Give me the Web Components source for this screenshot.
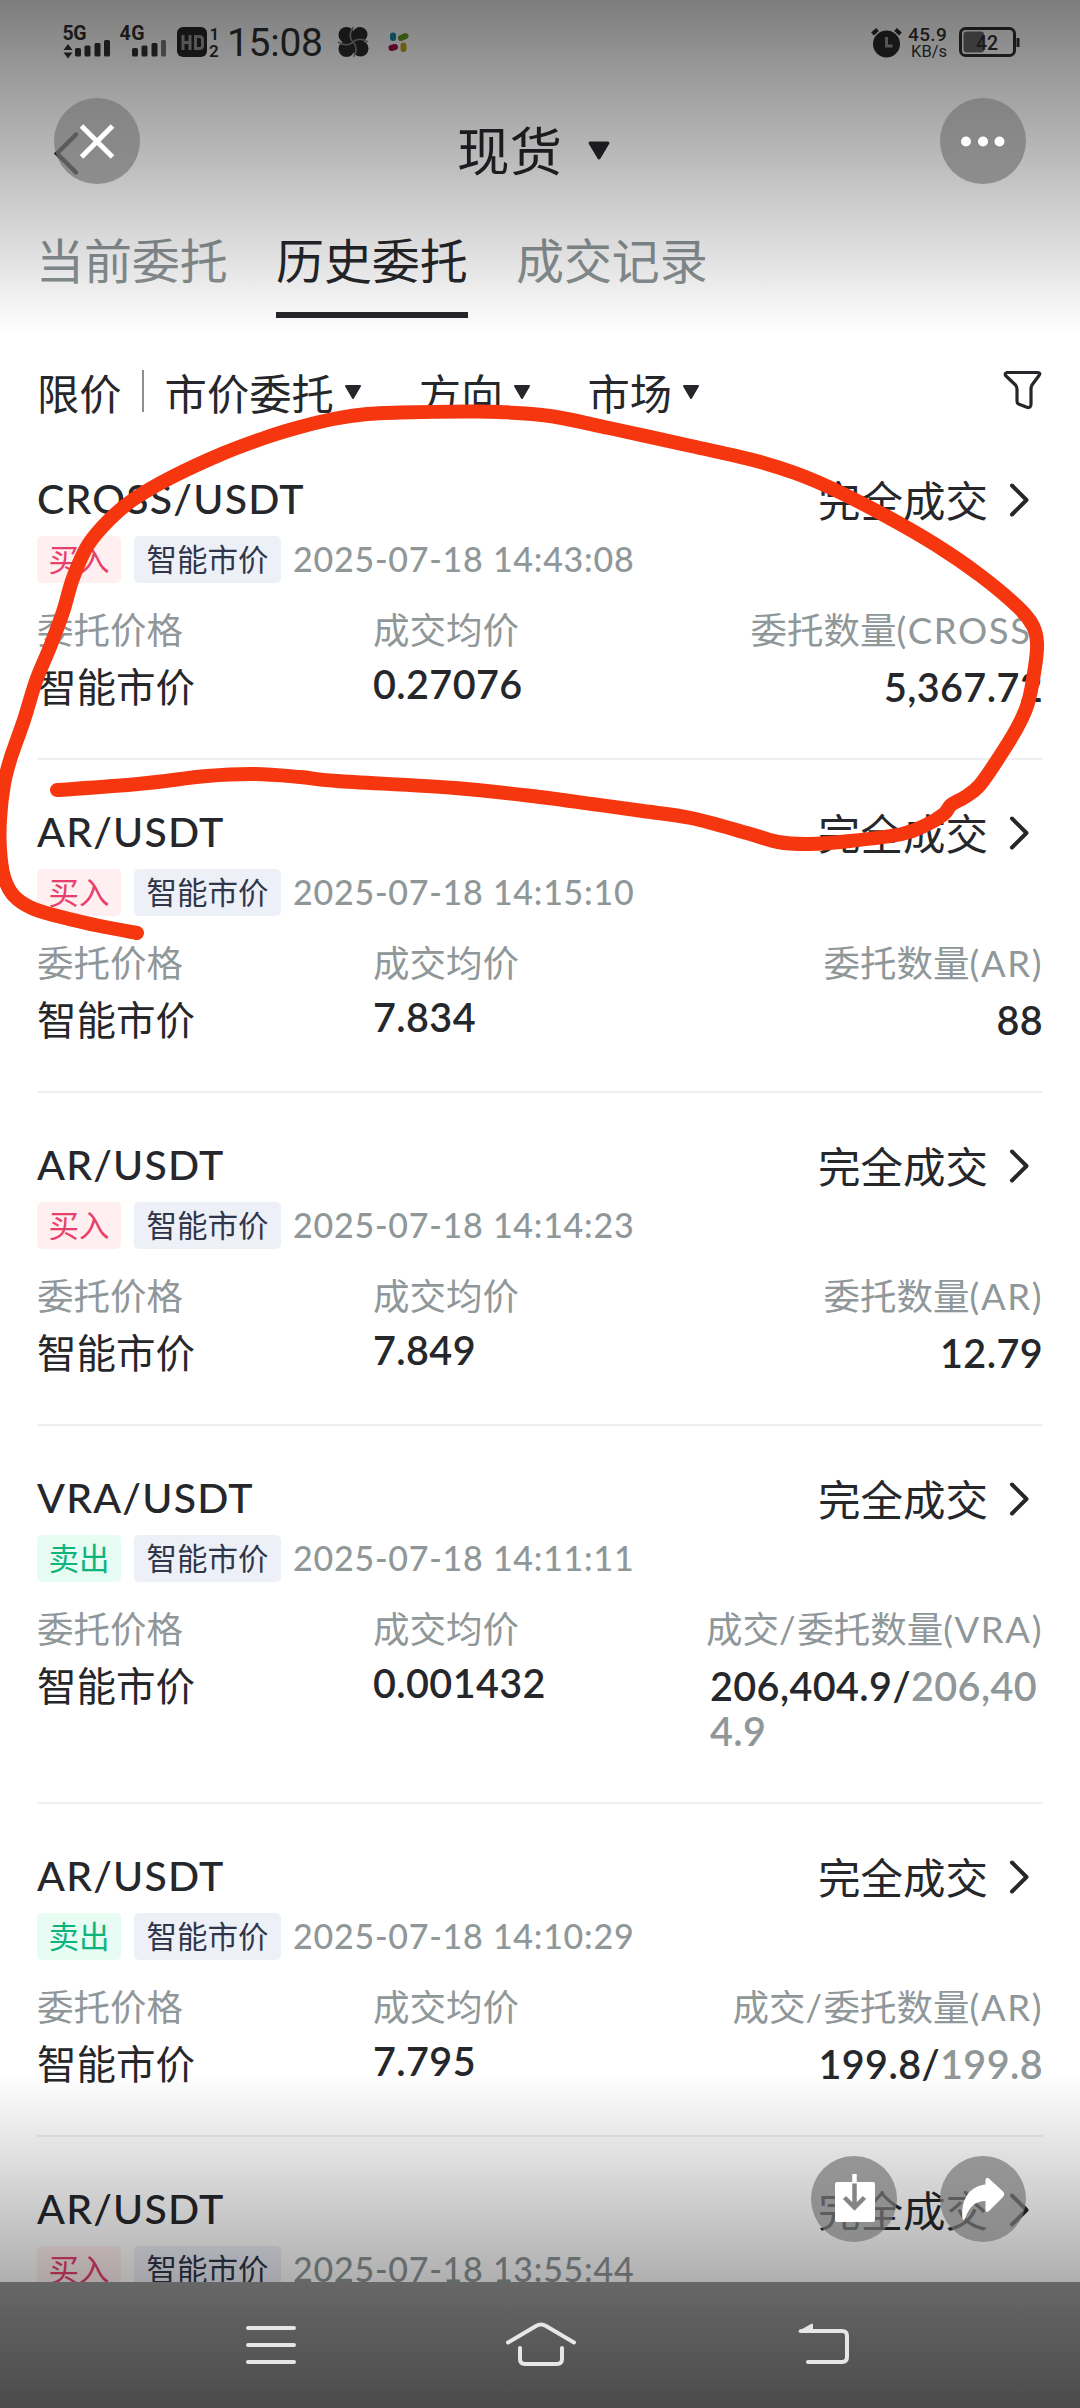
<!DOCTYPE html>
<html lang="zh-CN">
<head>
<meta charset="utf-8">
<title>现货 历史委托</title>
<style>
html,body{margin:0;padding:0;background:#fff}
body{width:1080px;height:2408px;overflow:hidden;font-family:Lato,"Noto Sans CJK SC",sans-serif;color:#26272b}
</style>
</head>
<body>
<phone-screen></phone-screen>
<script>
const define = (name, html, setup) => customElements.define(name, class extends HTMLElement {
  constructor() {
    super();
    this.attachShadow({mode: 'open'});
  }
  connectedCallback() {
    this.shadowRoot.innerHTML = typeof html === 'function' ? html(this) : html;
    if (setup) setup(this);
  }
});

define('status-bar', `
<style>
:host{display:flex;height:84px;padding:25px 60px 0 62px;box-sizing:border-box;justify-content:space-between;color:#252525}
.side{display:flex;align-items:flex-start}
.net{display:block}
svg{display:block;flex:none;overflow:visible}
svg text{font-family:Roboto,sans-serif;fill:#303030}
.time{font:400 39px/32px Roboto,sans-serif;margin:2px 0 0 7px;width:101px;white-space:nowrap;letter-spacing:-.3px;color:#303030}
.speed{display:flex;flex-direction:column;align-items:flex-end;font:500 19px/17px Roboto,sans-serif;color:#333;margin:1px 12px 0 5px;width:40px;letter-spacing:.3px}
.speed span:last-child{font-size:16.5px;font-weight:400;letter-spacing:0}
</style>
<div class="side">
<svg class="net" width="158" height="36" viewBox="62 25 158 36">
 <g font-weight="700" font-size="19.5"><text x="62.500" y="39.500" textLength="24">5G</text><text x="119.500" y="39.500" textLength="25">4G</text></g>
 <path d="M63.500 50l4.500-6 4.500 6zM63.500 52.500l4.500 6 4.500-6z" fill="#303030"/>
 <g fill="#303030"><rect x="75" y="48" width="6" height="8.500" rx="1.500"/><rect x="84.500" y="45.500" width="6" height="11" rx="1.500"/><rect x="94.500" y="43" width="6" height="13.500" rx="1.500"/><rect x="104" y="40" width="6" height="16.500" rx="1.500"/>
 <rect x="132" y="48" width="6" height="8.500" rx="1.500"/><rect x="141.500" y="45.500" width="6" height="11" rx="1.500"/><rect x="151.500" y="43" width="6" height="13.500" rx="1.500"/></g>
 <rect x="161" y="40" width="5" height="16.500" rx="1.500" fill="#777"/>
 <rect x="177" y="27" width="30" height="30" rx="6" fill="#262626"/>
 <path d="M183 35v15M190 35v15M183 42.500h7M195.500 36.500h4q3 0 3 3v6q0 3-3 3h-4z" fill="none" stroke="#999" stroke-width="3"/>
 <g font-weight="600" font-size="17"><text x="209.500" y="39.500">1</text><text x="209" y="56.500">2</text></g>
</svg>
<div class="time">15:08</div>
<svg width="72" height="36" viewBox="338 25 72 36" style="margin-left:10px">
 <g fill="#2b2b2b"><circle cx="346.500" cy="35" r="8"/><circle cx="360" cy="34.500" r="7.500"/><circle cx="360.500" cy="48.500" r="8"/><circle cx="346.500" cy="49" r="8"/><circle cx="353" cy="42" r="7"/></g>
 <path d="M353 42C349 38 349.500 32 353.500 27M353 42C357 38 363 38.500 368 42M353 42C357 46 357 52 353.500 57M353 42C349 46 343 45.500 338 42" fill="none" stroke="#8d8d8d" stroke-width="1.600"/>
 <g stroke-width="6" stroke-linecap="round"><path d="M393 35.500v2.500" stroke="#158aa8"/><path d="M401 38l4.500-2" stroke="#679b25"/><path d="M391.500 48l3.500-1" stroke="#a01150"/><path d="M403.500 45.500v3.500" stroke="#c2a31c"/></g>
</svg>
</div>
<div class="side">
<svg width="31" height="36" viewBox="873 25 31 36">
 <circle cx="888.500" cy="44" r="13.500" fill="#282828"/><path d="M874.500 34l5-4.500M897.500 29.500l5 4.500" stroke="#282828" stroke-width="4"/><path d="M888.500 37v9h6" fill="none" stroke="#999" stroke-width="3"/>
</svg>
<div class="speed"><span>45.9</span><span>KB/s</span></div>
<svg width="61" height="36" viewBox="960 25 61 36">
 <rect x="961.500" y="28.500" width="54" height="27" rx="5" fill="none" stroke="#303030" stroke-width="3"/><path d="M1019 38v9" stroke="#303030" stroke-width="3"/>
 <rect x="964.500" y="31.500" width="20.500" height="21" rx="3" fill="#6a6a6a"/><text x="977" y="49.500" font-size="19.500" font-weight="500">42</text>
</svg>
</div>`);

define('page-title', `
<style>
:host{display:flex;height:134px;align-items:center;justify-content:center;position:relative}
.t{display:flex;align-items:center;font-size:52.5px;line-height:60px;padding-right:12px}
.tri{margin-left:25px}
.back{position:absolute;left:52px;top:46px}
</style>
<svg class="back" width="30" height="46" viewBox="52 130 30 46"><path d="M76 134L57 153L76 172" transform="translate(0 .5)" fill="none" stroke="#26272b" stroke-width="4.500" stroke-linecap="round"/></svg>
<div class="t"><slot></slot><svg class="tri" width="24" height="20" viewBox="0 0 24 20"><path d="M3 2h18L12 17z" fill="#26272b" stroke="#26272b" stroke-width="3" stroke-linejoin="round"/></svg></div>`);

define('order-tabs', `
<style>
:host{display:flex;gap:48px;height:100px;padding:13px 0 0 36px;box-sizing:border-box;font-size:48px;line-height:60px;color:#8c9496}
span{height:81px;width:192px;white-space:nowrap;letter-spacing:-.1px}
.on{color:#26272b;border-bottom:6px solid #26272b}
span:not(.on){border-bottom:6px solid transparent}
</style>
<span>当前委托</span><span class="on">历史委托</span><span>成交记录</span>`);

define('filter-item', `
<style>:host{display:flex;align-items:center;white-space:nowrap}svg{margin:2px 0 0 10px}</style>
<slot></slot><svg width="18" height="16" viewBox="0 0 18 16"><path d="M2 2h14L9 14z" fill="#26272b" stroke="#26272b" stroke-width="2" stroke-linejoin="round"/></svg>`);

define('filter-bar', `
<style>
:host{display:flex;align-items:center;height:109px;padding:37px 37px 0;box-sizing:border-box;font-size:42.3px}
:host>*{flex:none}
.line{width:2px;height:42px;background:#8c8e92;margin:0 21px 0 20px}
.dir{margin-left:57px}.mk{margin-left:56px}
.funnel{margin-left:auto;margin-top:-2px}
</style>
<span>限价</span><i class="line"></i><filter-item>市价委托</filter-item><filter-item class="dir">方向</filter-item><filter-item class="mk">市场</filter-item>
<svg class="funnel" width="40" height="42" viewBox="0 0 40 42"><path d="M4 3.500H35Q38 4 36 6.500L29 16Q28 18 28 20V35Q28 39 24.500 38.500L15.500 35Q14 34 14 32V20Q14 18 12.500 16L2.500 6.500Q1.500 4 4 3.500Z" fill="none" stroke="#26272b" stroke-width="3.200" stroke-linejoin="round"/></svg>`);

define('order-item', el => {
  const a = n => el.getAttribute(n) || '';
  const buy = a('side') === 'buy';
  const label = a('label').replace(/[\/(].*?(?=委|$)/g, '<b>$&</b>');
  const cols = a('price') ? `
<div class="cols">
 <div class="c c1"><span class="l">委托价格</span><span class="v">智能市价</span></div>
 <div class="c c2"><span class="l">成交均价</span><span class="v n">${a('price')}</span></div>
 <div class="c c3"><span class="l">${label}</span><span class="v n">${a('amount')}<i>${a('total')}</i></span></div>
</div>` : '';
  return `
<style>
:host{display:flex;flex-direction:column;margin:0 37px 0 37px;padding:47px 0 49px;border-bottom:2px solid #efefef;box-sizing:border-box}
.head{display:flex;height:50px;align-items:center;justify-content:space-between;line-height:50px}
.pair{font-size:41px;letter-spacing:1.2px;font-weight:500}
.state{display:flex;align-items:center;font-size:42.5px;padding-right:11px}
.state span{padding-top:4px}
.state svg{margin-left:20px;margin-top:1px}
.tags{display:flex;margin-top:12px;height:47px;line-height:46px;align-items:stretch;font-size:30.5px}
.tag{border-radius:5px;text-align:center;white-space:nowrap}
.side{width:84px;background:${buy ? '#ffeff0' : '#e7fcf2'};color:${buy ? '#e8406c' : '#0fb47c'}}
.type{width:147px;margin-left:13px;background:#eef0f7;color:#30364a}
.date{font-size:34px;font-weight:500;color:#8f9799;margin-left:12px;letter-spacing:.75px;white-space:nowrap;line-height:46px}
.cols{display:flex;margin-top:24px}
.c{display:flex;flex-direction:column}
.c1{width:336px}.c3{margin-left:auto;align-items:flex-end;max-width:333px}
.l{font-size:36.5px;line-height:46px;height:46px;color:#8f9799;white-space:nowrap}
.l b{font-weight:400;letter-spacing:1.6px}
.v{font-size:39.5px;line-height:45px;margin-top:11px}
.n{font-weight:600;letter-spacing:.4px}
.c2 .n{margin-top:8px;margin-bottom:3px}
.c3 .n{word-break:break-all}
.n i{font-style:normal;color:#8f9799}
</style>
<div class="head"><span class="pair">${a('pair')}</span><span class="state"><span>完全成交</span><svg width="24" height="36" viewBox="0 0 24 36"><path d="M4 3.500L18.500 18L4 32.500" fill="none" stroke="#26272b" stroke-width="4" stroke-linecap="round" stroke-linejoin="round"/></svg></span></div>
<div class="tags"><span class="tag side">${buy ? '买入' : '卖出'}</span><span class="tag type">智能市价</span><span class="date">${a('date')}</span></div>
${cols}`;
});

define('round-button', `
<style>:host{display:block;width:86px;height:86px;border-radius:50%;background:rgba(118,118,118,.7);position:absolute}</style><slot></slot>`);

define('pen-stroke', `
<style>:host{position:absolute;left:0;top:0;width:1080px;height:2408px}svg{display:block}</style>
<svg width="1080" height="2408"><path fill="none" stroke="#f5360e" stroke-width="14" stroke-linecap="round" stroke-linejoin="round"/></svg>`,
el => {
  const p = [[137,933],[100,926],[69,919],[34,909],[14,896],[4,877],[0,850],[0,819],[4,784],[11,757],[24,720],[36,681],[50,647],[63,612],[73,578],[88,545],[110,519],[134,499],[172,477],[224,453],[267,437],[300,427],[333,419],[367,414],[400,412.5],[467,411.5],[500,412],[550,416],[609,428],[691,446],[753,460],[795,473],[833,489],[884,515],[936,545],[981,576],[1019,608],[1033,626],[1037,643],[1035,667],[1028,703],[1017,728],[996,762],[979,786],[965,797],[951,805],[944,814],[926,825],[902,834],[850,841],[809,844],[778,842],[747,833],[691,818],[643,811],[592,804],[540,797],[455,788],[337,781],[300,777],[255,774],[207,776],[138,784],[57,790]];
  let d = `M${p[0]}`;
  for (let i = 0; i < p.length - 1; i++) {
    const a = p[i - 1] || p[i], b = p[i], c = p[i + 1], e = p[i + 2] || c;
    d += `C${b[0] + (c[0] - a[0]) / 6} ${b[1] + (c[1] - a[1]) / 6} ${c[0] - (e[0] - b[0]) / 6} ${c[1] - (e[1] - b[1]) / 6} ${c}`;
  }
  el.shadowRoot.querySelector('path').setAttribute('d', d);
});

define('system-nav', `
<style>
:host{position:absolute;left:0;right:0;bottom:0;height:126px;display:flex;padding:34px 0 0 240px;box-sizing:border-box;background:linear-gradient(#676767,#4b4b4b)}
svg{display:block;flex:none;fill:none;stroke:#e6e6e6;stroke-width:4;stroke-linecap:round;stroke-linejoin:round}
.home{margin:0 216px 0 201px}
</style>
<svg width="62" height="56" viewBox="240 2316 62 56"><path d="M248 2328h46M248 2345h46M248 2362h46"/></svg>
<svg class="home" width="76" height="56" viewBox="503 2316 76 56"><path d="M508 2342.500L536 2326Q541 2323 546 2326L574 2342.500M520 2348V2359Q520 2364 525 2364H557Q562 2364 562 2359V2348"/></svg>
<svg width="60" height="56" viewBox="795 2316 60 56"><path d="M801 2331H842Q847 2331 847 2336V2357Q847 2362 842 2362H808"/><path d="M799.500 2331.500L812 2324.500V2331.500Z" fill="#e6e6e6" stroke-width="2"/></svg>`);

define('phone-screen', `
<style>
:host{display:block;position:relative;width:1080px;height:2408px;overflow:hidden;background:#fff}
.shade{position:absolute;left:0;right:0;height:335px;pointer-events:none}
.top{top:0;background:linear-gradient(rgba(0,0,0,.51),rgba(0,0,0,0))}
.bot{bottom:0;background:linear-gradient(rgba(0,0,0,0),rgba(0,0,0,.5))}
round-button svg{display:block}
</style>
<status-bar></status-bar>
<page-title>现货</page-title>
<order-tabs></order-tabs>
<filter-bar></filter-bar>
<main>
<order-item pair="CROSS/USDT" side="buy" date="2025-07-18 14:43:08" price="0.27076" label="委托数量(CROSS)" amount="5,367.72"></order-item>
<order-item pair="AR/USDT" side="buy" date="2025-07-18 14:15:10" price="7.834" label="委托数量(AR)" amount="88"></order-item>
<order-item pair="AR/USDT" side="buy" date="2025-07-18 14:14:23" price="7.849" label="委托数量(AR)" amount="12.79"></order-item>
<order-item pair="VRA/USDT" side="sell" date="2025-07-18 14:11:11" price="0.001432" label="成交/委托数量(VRA)" amount="206,404.9/" total="206,404.9"></order-item>
<order-item pair="AR/USDT" side="sell" date="2025-07-18 14:10:29" price="7.795" label="成交/委托数量(AR)" amount="199.8/" total="199.8"></order-item>
<order-item pair="AR/USDT" side="buy" date="2025-07-18 13:55:44"></order-item>
</main>
<pen-stroke></pen-stroke>
<div class="shade top"></div>
<div class="shade bot"></div>
<round-button style="left:54px;top:98px"><svg width="86" height="86" viewBox="54 98 86 86"><path d="M81.500 126L112.500 157M112.500 126L81.500 157" stroke="#fff" stroke-width="5"/></svg></round-button>
<round-button style="left:940px;top:98px"><svg width="86" height="86" viewBox="940 98 86 86" fill="#fff"><circle cx="966" cy="141.500" r="5"/><circle cx="983" cy="141.500" r="5"/><circle cx="999.500" cy="141.500" r="5"/></svg></round-button>
<round-button style="left:811px;top:2156px"><svg width="86" height="86" viewBox="811 2156 86 86"><rect x="835" y="2182" width="40" height="40" rx="2" fill="#fff"/><path d="M854.500 2174v9" stroke="#fff" stroke-width="4.500"/><path d="M854.500 2183.500V2206M844.500 2197.500L854.500 2207.500L864.500 2197.500" fill="none" stroke="#858585" stroke-width="4.500"/></svg></round-button>
<round-button style="left:940px;top:2156px"><svg width="86" height="86" viewBox="940 2156 86 86"><path d="M985.500 2180Q986 2176.500 989 2178.500L1003 2191.500Q1005.500 2194 1003 2197L989 2211Q986 2213.500 985.500 2210V2201C975 2201 969 2207 965 2219Q963.500 2221 962.500 2219C961 2203 966 2187 985.500 2184.500Z" fill="#fff"/></svg></round-button>
<system-nav></system-nav>`);
</script>
</body>
</html>
